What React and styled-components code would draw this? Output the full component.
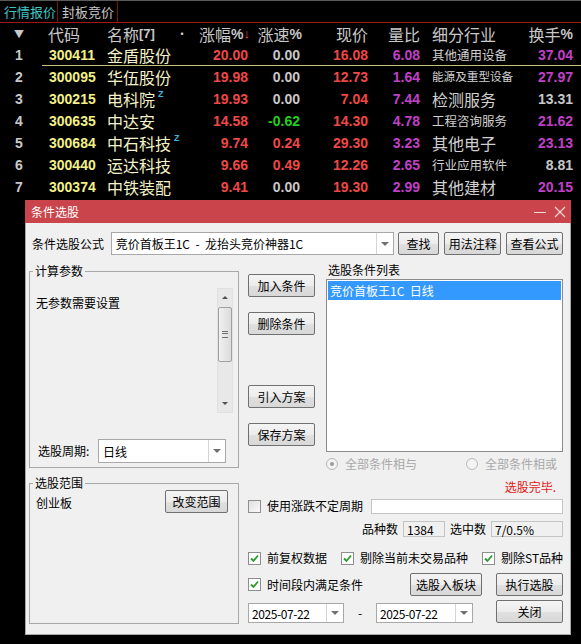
import styled, { createGlobalStyle } from "styled-components";

const GlobalStyle = createGlobalStyle`
  * { box-sizing: border-box; }
  html, body { margin: 0; padding: 0; background: #000; }
  body {
    font-family: "Noto Sans CJK SC", "Liberation Sans", sans-serif;
    overflow: hidden;
  }
`;

const COLS = "42px 63px 67px 23px 55px 52px 68px 52px 108px 45px";

const Screen = styled.div`
  position: relative;
  width: 581px;
  height: 644px;
  background: #000;
  overflow: hidden;
`;

const TabBar = styled.div`
  display: flex;
  height: 23px;
  border-top: 1px solid #5a5a5a;
  border-bottom: 1px solid #a01818;
`;

const Tab = styled.div`
  display: flex;
  align-items: center;
  width: ${(p) => p.$w}px;
  padding-left: 4px;
  border-right: 1px solid #801010;
  font-size: 13px;
  color: ${(p) => (p.$active ? "#3cc8c8" : "#c8c8c8")};
`;

const Row = styled.div`
  display: grid;
  grid-template-columns: ${COLS};
  height: ${(p) => (p.$header ? 21 : 22)}px;
  background: ${(p) =>
    p.$selected
      ? "linear-gradient(#c8c078, #c8c078) no-repeat 42px 21px / calc(100% - 42px) 1px"
      : "none"};
`;

const Cell = styled.div`
  display: flex;
  align-items: center;
  justify-content: ${(p) =>
    p.$align === "right" ? "flex-end" : p.$align === "center" ? "center" : "flex-start"};
  padding-left: ${(p) => p.$pl || 0}px;
  padding-right: ${(p) => p.$pr || 0}px;
  color: ${(p) => p.$color || "#c8c8c8"};
  font-size: ${(p) => p.$size || 16}px;
  line-height: 1;
  white-space: nowrap;
`;

const Num = styled.span`
  font-family: "Liberation Sans", Arial, sans-serif;
  font-weight: bold;
  font-size: 14px;
  color: ${(p) => p.$color || "#c8c8c8"};
`;

const Sup = styled.span`
  align-self: flex-start;
  margin: 2px 0 0 3px;
  font-family: "Liberation Sans", Arial, sans-serif;
  font-weight: bold;
  font-size: 9px;
  color: #38b8e0;
`;

const Small = styled.span`
  font-family: "Liberation Sans", Arial, sans-serif;
  font-weight: bold;
  font-size: ${(p) => p.$size || 14}px;
  color: ${(p) => p.$color || "#c8c8c8"};
`;

/* ---- dialog ---- */

const Dialog = styled.div`
  position: absolute;
  left: 25px;
  top: 200px;
  width: 546px;
  height: 435px;
  display: flex;
  flex-direction: column;
  font-size: 12px;
  color: #000;
`;

const TitleBar = styled.div`
  display: flex;
  align-items: center;
  height: 23px;
  padding: 0 4px 0 6px;
  background: #c9454b;
  color: #fff;
  font-size: 12px;
`;

const TitleText = styled.span`
  flex: 1;
`;

const WinIcon = styled.svg`
  width: 14px;
  height: 14px;
  margin-left: 6px;
`;

const Body = styled.div`
  flex: 1;
  background: #f0f0f0;
  border: 1px solid #a8a8a8;
  border-top: none;
  padding: 9px 7px 0 3px;
`;

const Line = styled.div`
  display: flex;
  align-items: ${(p) => p.$items || "center"};
  justify-content: ${(p) => p.$justify || "flex-start"};
  height: ${(p) => p.$h}px;
  margin-top: ${(p) => p.$mt || 0}px;
  padding-right: ${(p) => p.$pr || 0}px;
`;

const Label = styled.span`
  display: inline-block;
  width: ${(p) => (p.$w ? `${p.$w}px` : "auto")};
  margin-left: ${(p) => p.$ml || 0}px;
  margin-top: ${(p) => p.$mt || 0}px;
  color: ${(p) => p.$color || "#000"};
  line-height: 14px;
  white-space: nowrap;
`;

const Button = styled.button`
  width: ${(p) => p.$w}px;
  height: 23px;
  margin-left: ${(p) => p.$ml || 0}px;
  margin-top: ${(p) => p.$mt || 0}px;
  padding: 0;
  font-family: inherit;
  font-size: 12px;
  color: #000;
  border: 1px solid #707070;
  border-radius: 2px;
  background: linear-gradient(#f4f4f4, #ececec 50%, #e0e0e0 51%, #d8d8d8);
`;

const Combo = styled.div`
  display: flex;
  width: ${(p) => p.$w}px;
  height: ${(p) => p.$h || 23}px;
  margin-left: ${(p) => p.$ml || 0}px;
  background: #fff;
  border: 1px solid #a8a8a8;
`;

const ComboText = styled.div`
  flex: 1;
  display: flex;
  align-items: center;
  padding-left: ${(p) => p.$pl || 4}px;
  font-size: ${(p) => p.$size || 12}px;
  letter-spacing: ${(p) => p.$ls || 0}px;
  white-space: pre;
  overflow: hidden;
`;

const ComboArrow = styled.div`
  display: flex;
  align-items: center;
  justify-content: center;
  width: 17px;
  border-left: 1px solid #d4d4d4;
  &::after {
    content: "";
    border-left: 4px solid transparent;
    border-right: 4px solid transparent;
    border-top: 4px solid #707070;
  }
`;

const Main = styled.div`
  display: flex;
  gap: 9px;
`;

const LeftCol = styled.div`
  width: 210px;
  padding-top: 9px;
`;

const Group = styled.fieldset`
  height: ${(p) => p.$h}px;
  margin: ${(p) => p.$mt || 0}px 0 0 0;
  padding: 0 5px 0 6px;
  border: 1px solid #a8a8a8;
  min-width: 0;
`;

const Legend = styled.legend`
  padding: 0 2px;
  margin-left: -3px;
  font-size: 12px;
  line-height: 14px;
`;

const ParamArea = styled.div`
  display: flex;
  height: 125px;
  margin-top: 10px;
`;

const ParamText = styled.div`
  flex: 1;
  padding-top: 8px;
  line-height: 14px;
`;

const ScrollBar = styled.div`
  display: flex;
  flex-direction: column;
  width: 16px;
  background: #e8e8e8;
  border: 1px solid #e0e0e0;
`;

const ScrollArrow = styled.div`
  display: flex;
  align-items: center;
  justify-content: center;
  height: 17px;
  &::after {
    content: "";
    border-left: 3px solid transparent;
    border-right: 3px solid transparent;
    ${(p) =>
      p.$up ? "border-bottom: 3px solid #505050;" : "border-top: 3px solid #505050;"}
  }
`;

const Thumb = styled.div`
  display: flex;
  align-items: center;
  justify-content: center;
  height: 55px;
  margin: 1px 0;
  border: 1px solid #a0a0a0;
  border-radius: 2px;
  background: linear-gradient(90deg, #f0f0f0, #dcdcdc);
  &::after {
    content: "";
    width: 6px;
    height: 5px;
    border-top: 1px solid #707070;
    border-bottom: 1px solid #707070;
    background: linear-gradient(#707070, #707070) no-repeat 0 1px / 6px 1px;
  }
`;

const Track = styled.div`
  flex: 1;
`;

const RightCol = styled.div`
  width: 315px;
`;

const TopSection = styled.div`
  display: flex;
  height: 194px;
`;

const ButtonStack = styled.div`
  display: flex;
  flex-direction: column;
  width: 67px;
  padding-top: 19px;
`;

const ListArea = styled.div`
  width: 237px;
  margin-left: 11px;
  padding-top: 6px;
`;

const ListBox = styled.div`
  height: 173px;
  margin-top: 1px;
  padding: 1px;
  background: #fff;
  border: 1px solid #8c8c8c;
`;

const ListItem = styled.div`
  display: flex;
  align-items: center;
  height: 19px;
  padding-left: 2px;
  background: ${(p) => (p.$selected ? "#3399ff" : "transparent")};
  color: ${(p) => (p.$selected ? "#fff" : "#000")};
  white-space: pre;
`;

const RadioGrid = styled.div`
  display: grid;
  grid-template-columns: 140px auto;
  height: 14px;
  margin: 8px 0 0 78px;
`;

const RadioItem = styled.div`
  display: flex;
  align-items: center;
`;

const RadioDot = styled.span`
  display: flex;
  align-items: center;
  justify-content: center;
  width: 12px;
  height: 12px;
  border: 1px solid #b8b8b8;
  border-radius: 50%;
  background: #f4f4f4;
  &::after {
    content: "";
    width: 4px;
    height: 4px;
    border-radius: 50%;
    background: ${(p) => (p.$checked ? "#9a9a9a" : "transparent")};
  }
`;

const Check = styled.span`
  display: inline-flex;
  align-items: center;
  justify-content: center;
  flex: none;
  width: 13px;
  height: 13px;
  border: 1px solid #8e8e8e;
  background: ${(p) => (p.$checked ? "#fff" : "linear-gradient(135deg, #e0e0e0, #fafafa)")};
`;

const CheckItem = styled.div`
  display: flex;
  align-items: center;
`;

const TextField = styled.div`
  display: flex;
  align-items: center;
  width: ${(p) => p.$w}px;
  height: ${(p) => p.$h || 16}px;
  margin-left: ${(p) => p.$ml || 0}px;
  padding-left: 3px;
  background: ${(p) => (p.$readonly ? "#f0f0f0" : "#fff")};
  border: 1px solid #c4c4c4;
`;

const ChecksGrid = styled.div`
  display: grid;
  grid-template-columns: 93px 141px auto;
  height: 13px;
  margin-top: 14px;
`;

const Dash = styled.span`
  width: 32px;
  text-align: center;
  line-height: 20px;
`;

const rows = [
  ["1", "300411", "金盾股份", false, "20.00", ["0.00", "#c8c8c8"], "16.08", "6.08", ["其他通用设备", 12.5], ["37.04", "#c040c8"]],
  ["2", "300095", "华伍股份", false, "19.98", ["0.00", "#c8c8c8"], "12.73", "1.64", ["能源及重型设备", 11.6], ["27.97", "#c040c8"]],
  ["3", "300215", "电科院", true, "19.93", ["0.00", "#c8c8c8"], "7.04", "7.44", ["检测服务", 16], ["13.31", "#c8c8c8"]],
  ["4", "300635", "中达安", false, "14.58", ["-0.62", "#20d020"], "14.30", "4.78", ["工程咨询服务", 12.5], ["21.62", "#c040c8"]],
  ["5", "300684", "中石科技", true, "9.74", ["0.24", "#f04848"], "29.30", "3.23", ["其他电子", 16], ["23.13", "#c040c8"]],
  ["6", "300440", "运达科技", false, "9.66", ["0.49", "#f04848"], "12.26", "2.65", ["行业应用软件", 12.5], ["8.81", "#c8c8c8"]],
  ["7", "300374", "中铁装配", false, "9.41", ["0.00", "#c8c8c8"], "19.30", "2.99", ["其他建材", 16], ["20.15", "#c040c8"]],
];

const RED = "#f04848";
const MAG = "#c040c8";

function CheckMark() {
  return (
    <svg width="9" height="9" viewBox="0 0 9 9">
      <polyline points="1,4.5 3.5,7 8,1.5" fill="none" stroke="#2a9a2a" strokeWidth="1.8" />
    </svg>
  );
}

function CheckBox({ checked, label }) {
  return (
    <CheckItem>
      <Check $checked={checked}>{checked && <CheckMark />}</Check>
      <Label $ml={6}>{label}</Label>
    </CheckItem>
  );
}

function Quotes() {
  return (
    <>
      <TabBar>
        <Tab $w={58} $active>行情报价</Tab>
        <Tab $w={60}>封板竞价</Tab>
      </TabBar>
      <Row $header>
        <Cell $align="center" $pr={4} $size={10}>▼</Cell>
        <Cell $pl={6}>代码</Cell>
        <Cell $pl={2}>
          名称<Small $size={13}>[7]</Small>
        </Cell>
        <Cell $pl={4} $size={12}>•</Cell>
        <Cell $align="right">
          涨幅<Small>%</Small>
          <Small $color={RED} $size={13}>↓</Small>
        </Cell>
        <Cell $align="right">
          涨速<Small>%</Small>
        </Cell>
        <Cell $align="right" $pr={2}>现价</Cell>
        <Cell $align="right" $pr={2}>量比</Cell>
        <Cell $pl={10}>细分行业</Cell>
        <Cell $align="right" $pr={2}>
          换手<Small>%</Small>
        </Cell>
      </Row>
      {rows.map((r, i) => (
        <Row key={r[1]} $selected={i === 0}>
          <Cell $align="center" $pr={4}>
            <Num>{r[0]}</Num>
          </Cell>
          <Cell $pl={7}>
            <Num $color="#f2f088">{r[1]}</Num>
          </Cell>
          <Cell $pl={2} $color="#f4f2c8">
            {r[2]}
            {r[3] && <Sup>Z</Sup>}
          </Cell>
          <Cell />
          <Cell $align="right" $pr={2}>
            <Num $color={RED}>{r[4]}</Num>
          </Cell>
          <Cell $align="right" $pr={2}>
            <Num $color={r[5][1]}>{r[5][0]}</Num>
          </Cell>
          <Cell $align="right" $pr={2}>
            <Num $color={RED}>{r[6]}</Num>
          </Cell>
          <Cell $align="right" $pr={2}>
            <Num $color={MAG}>{r[7]}</Num>
          </Cell>
          <Cell $pl={10} $size={r[8][1]} $color="#d0d0d0">
            {r[8][0]}
          </Cell>
          <Cell $align="right" $pr={2}>
            <Num $color={r[9][1]}>{r[9][0]}</Num>
          </Cell>
        </Row>
      ))}
    </>
  );
}

function SelectDialog() {
  return (
    <Dialog>
      <TitleBar>
        <TitleText>条件选股</TitleText>
        <WinIcon viewBox="0 0 14 14">
          <line x1="1" y1="7.5" x2="13" y2="7.5" stroke="#f6dcdc" strokeWidth="1" />
        </WinIcon>
        <WinIcon viewBox="0 0 14 14">
          <line x1="2" y1="2" x2="12" y2="12" stroke="#f6dcdc" strokeWidth="1.1" />
          <line x1="12" y1="2" x2="2" y2="12" stroke="#f6dcdc" strokeWidth="1.1" />
        </WinIcon>
      </TitleBar>
      <Body>
        <Line $h={23}>
          <Label $w={79} $ml={3}>条件选股公式</Label>
          <Combo $w={284}>
            <ComboText>{"竞价首板王1C  -  龙抬头竞价神器1C"}</ComboText>
            <ComboArrow />
          </Combo>
          <Button $w={42} $ml={4}>查找</Button>
          <Button $w={57} $ml={5}>用法注释</Button>
          <Button $w={57} $ml={5}>查看公式</Button>
        </Line>
        <Main>
          <LeftCol>
            <Group $h={204}>
              <Legend>计算参数</Legend>
              <ParamArea>
                <ParamText>无参数需要设置</ParamText>
                <ScrollBar>
                  <ScrollArrow $up />
                  <Thumb />
                  <Track />
                  <ScrollArrow />
                </ScrollBar>
              </ParamArea>
              <Line $h={24} $mt={26}>
                <Label $w={60} $ml={2}>选股周期:</Label>
                <Combo $w={128} $h={24}>
                  <ComboText>日线</ComboText>
                  <ComboArrow />
                </Combo>
              </Line>
            </Group>
            <Group $h={148} $mt={8}>
              <Legend>选股范围</Legend>
              <Line $h={23} $items="flex-start" $justify="space-between" $pr={5}>
                <Label $mt={6}>创业板</Label>
                <Button $w={63}>改变范围</Button>
              </Line>
            </Group>
          </LeftCol>
          <RightCol>
            <TopSection>
              <ButtonStack>
                <Button $w={67}>加入条件</Button>
                <Button $w={67} $mt={15}>删除条件</Button>
                <Button $w={67} $mt={50}>引入方案</Button>
                <Button $w={67} $mt={15}>保存方案</Button>
              </ButtonStack>
              <ListArea>
                <Label $ml={2}>选股条件列表</Label>
                <ListBox>
                  <ListItem $selected>{"竞价首板王1C  日线"}</ListItem>
                </ListBox>
              </ListArea>
            </TopSection>
            <RadioGrid>
              <RadioItem>
                <RadioDot $checked />
                <Label $ml={7} $color="#a8a8a8">全部条件相与</Label>
              </RadioItem>
              <RadioItem>
                <RadioDot />
                <Label $ml={7} $color="#a8a8a8">全部条件相或</Label>
              </RadioItem>
            </RadioGrid>
            <Line $h={14} $mt={9} $justify="flex-end" $pr={7}>
              <Label $color="#e01818">选股完毕.</Label>
            </Line>
            <Line $h={14} $mt={5}>
              <CheckBox label="使用涨跌不定周期" />
              <TextField $w={192} $h={15} style={{ marginLeft: "auto" }} />
            </Line>
            <Line $h={16} $mt={8} $justify="flex-end">
              <Label>品种数</Label>
              <TextField $w={42} $ml={5} $readonly>1384</TextField>
              <Label $ml={5}>选中数</Label>
              <TextField $w={72} $ml={5} $readonly>7/0.5%</TextField>
            </Line>
            <ChecksGrid>
              <CheckBox checked label="前复权数据" />
              <CheckBox checked label="剔除当前未交易品种" />
              <CheckBox checked label="剔除ST品种" />
            </ChecksGrid>
            <Line $h={23} $mt={9}>
              <CheckBox checked label="时间段内满足条件" />
              <Button $w={72} style={{ marginLeft: "auto" }}>选股入板块</Button>
              <Button $w={67} $ml={14}>执行选股</Button>
            </Line>
            <Line $h={23} $mt={4} $items="flex-end">
              <Combo $w={96} $h={20}>
                <ComboText $pl={3} $ls={-0.4}>2025-07-22</ComboText>
                <ComboArrow />
              </Combo>
              <Dash>-</Dash>
              <Combo $w={97} $h={20}>
                <ComboText $pl={3} $ls={-0.4}>2025-07-22</ComboText>
                <ComboArrow />
              </Combo>
              <Button $w={67} style={{ marginLeft: "auto" }}>关闭</Button>
            </Line>
          </RightCol>
        </Main>
      </Body>
    </Dialog>
  );
}

export default function App() {
  return (
    <>
      <GlobalStyle />
      <Screen>
        <Quotes />
        <SelectDialog />
      </Screen>
    </>
  );
}
